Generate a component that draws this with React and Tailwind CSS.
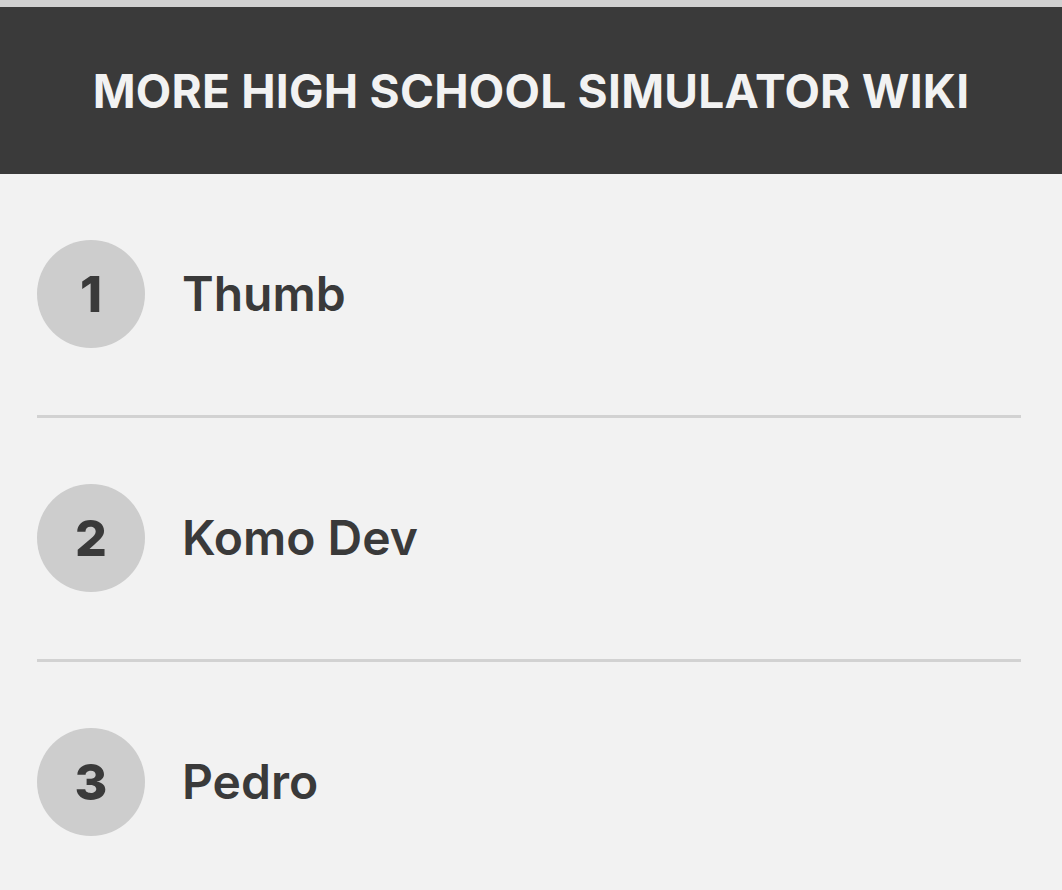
import React from "react";

const people = ["Thumb", "Komo Dev", "Pedro"];

export default function App() {
  return (
    <div
      className="min-h-[890px] w-full bg-[#f2f2f2]"
      style={{ fontFamily: "Inter, 'Noto Sans', sans-serif" }}
    >
      {/* Header */}
      <div className="border-t-[7px] border-[#d0d0d0] bg-[#3a3a3a] h-[174px] flex items-center justify-center">
        <h2 className="text-[46px] font-bold uppercase text-[#f2f2f2] tracking-[0.25px] leading-none">
          More High School Simulator Wiki
        </h2>
      </div>

      {/* List */}
      <ul className="px-[37px] mr-[4px]">
        {people.map((name, i) => (
          <li
            key={name}
            className={
              "flex items-center gap-[37px] pt-[66px] pb-[67px] " +
              (i < people.length - 1 ? "border-b-[3px] border-[#d2d2d2]" : "")
            }
          >
            <div className="w-[108px] h-[108px] rounded-full bg-[#cdcdcd] flex items-center justify-center text-[50px] font-extrabold text-[#3a3a3a] leading-none">
              {i + 1}
            </div>
            <span className="text-[48px] font-semibold text-[#3a3a3a] leading-none">
              {name}
            </span>
          </li>
        ))}
      </ul>
    </div>
  );
}
